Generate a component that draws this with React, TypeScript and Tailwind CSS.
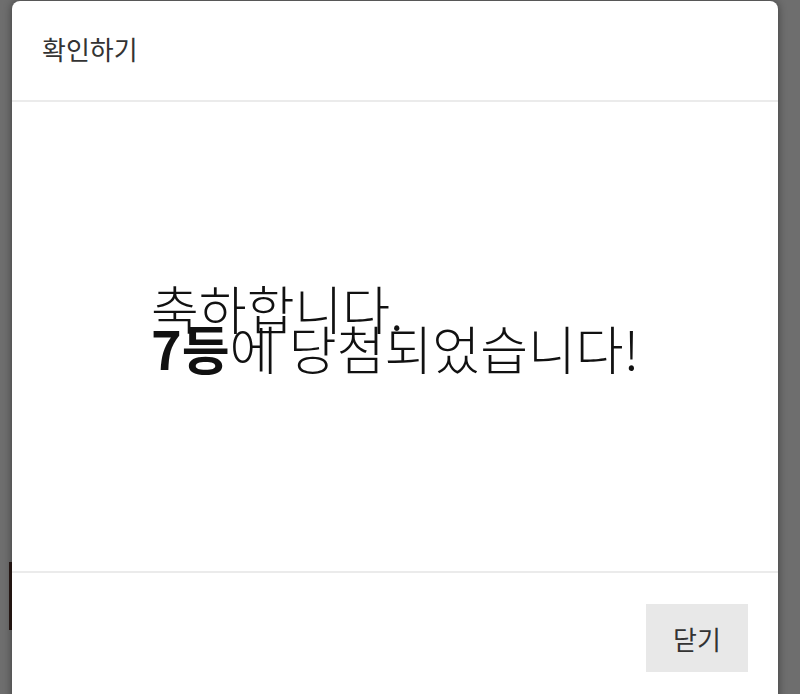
import React from "react";

export default function App() {
  const font = { fontFamily: '"Noto Sans CJK KR", "Noto Sans", sans-serif' };
  return (
    <div
      className="relative h-[694px] w-[800px] overflow-hidden bg-[#6e6e6e]"
      style={font}
    >
      <div className="absolute left-[9px] top-[562px] h-[68px] w-[6px] bg-[#2a1a16]" />
      <div className="relative ml-[12px] mt-[1px] w-[766px] rounded-t-[8px] bg-white shadow-[0_0_8px_rgba(0,0,0,0.45)]">
        <div className="flex h-[101px] items-center border-b-2 border-[#ebebeb] px-[30px] pb-[4px] text-[26px] text-[#333333]">
          확인하기
        </div>
        <div className="flex h-[469px] items-center justify-center pb-[18px]">
          <div className="text-left text-[52px] leading-[40px] text-[#111111] font-light">
            <div>축하합니다.</div>
            <div>
              <span className="font-bold">7등</span>에 당첨되었습니다!
            </div>
          </div>
        </div>
        <div className="flex h-[140px] justify-end border-t-2 border-[#ebebeb] pr-[30px] pt-[31px]">
          <button className="h-[68px] w-[102px] bg-[#e8e8e8] text-[26px] text-[#333333]">
            닫기
          </button>
        </div>
      </div>
    </div>
  );
}
